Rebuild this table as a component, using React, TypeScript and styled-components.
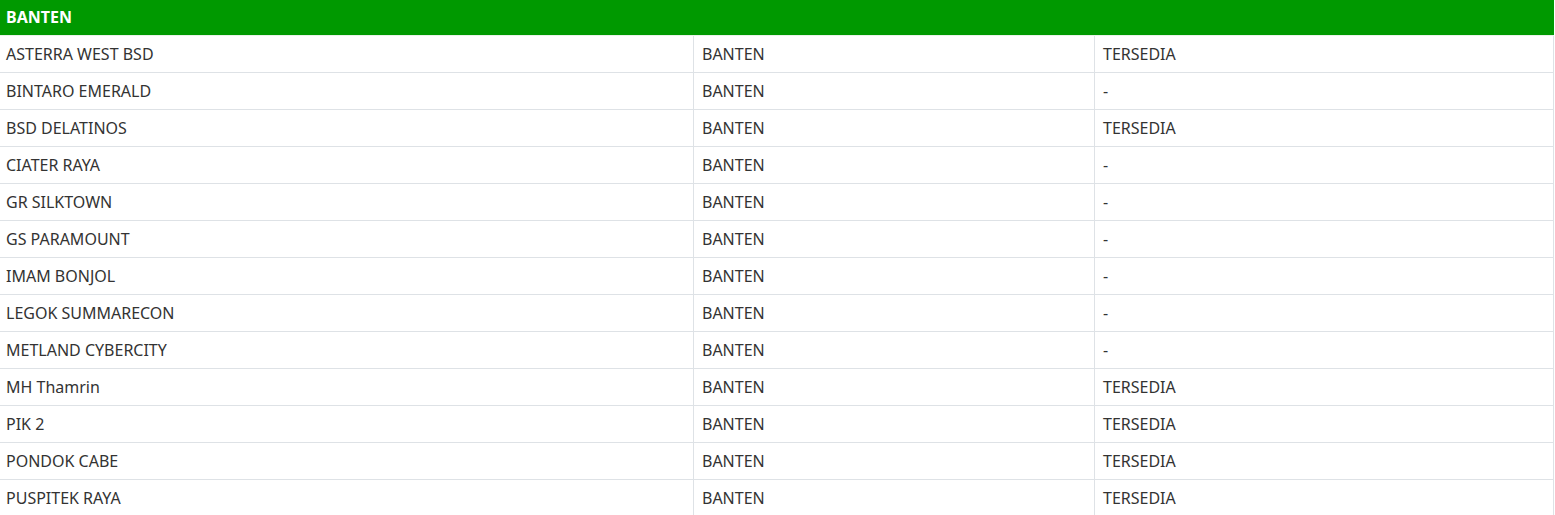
import * as React from 'react';
import styled, { createGlobalStyle } from 'styled-components';

const GlobalStyle = createGlobalStyle`
  body {
    margin: 0;
    background: #ffffff;
    font-family: 'Noto Sans', 'Open Sans', sans-serif;
  }
`;

const Table = styled.div`
  width: 1554px;
  display: grid;
  grid-template-columns: 694px 401px 459px;
`;

const Heading = styled.div`
  grid-column: 1 / -1;
  height: 36px;
  background-color: #009900;
  color: #ffffff;
  font-weight: 700;
  font-size: 16px;
  line-height: 35px;
  padding: 0 6px;
  box-sizing: border-box;
  border-bottom: 1px solid #e8f3e8;
`;

const Cell = styled.div`
  height: 37px;
  box-sizing: border-box;
  padding: 0 0 0 ${(props: { first?: boolean }) => (props.first ? 6 : 8)}px;
  display: flex;
  align-items: center;
  font-size: 16px;
  color: #333333;
  border-bottom: 1px solid #dee2e6;
  border-right: 1px solid #dee2e6;
  white-space: nowrap;
  overflow: hidden;
`;

type Row = { name: string; region: string; status: string };

const rows: Row[] = [
  { name: 'ASTERRA WEST BSD', region: 'BANTEN', status: 'TERSEDIA' },
  { name: 'BINTARO EMERALD', region: 'BANTEN', status: '-' },
  { name: 'BSD DELATINOS', region: 'BANTEN', status: 'TERSEDIA' },
  { name: 'CIATER RAYA', region: 'BANTEN', status: '-' },
  { name: 'GR SILKTOWN', region: 'BANTEN', status: '-' },
  { name: 'GS PARAMOUNT', region: 'BANTEN', status: '-' },
  { name: 'IMAM BONJOL', region: 'BANTEN', status: '-' },
  { name: 'LEGOK SUMMARECON', region: 'BANTEN', status: '-' },
  { name: 'METLAND CYBERCITY', region: 'BANTEN', status: '-' },
  { name: 'MH Thamrin', region: 'BANTEN', status: 'TERSEDIA' },
  { name: 'PIK 2', region: 'BANTEN', status: 'TERSEDIA' },
  { name: 'PONDOK CABE', region: 'BANTEN', status: 'TERSEDIA' },
  { name: 'PUSPITEK RAYA', region: 'BANTEN', status: 'TERSEDIA' },
];

const App = () => (
  <>
    <GlobalStyle />
    <Table>
      <Heading>BANTEN</Heading>
      {rows.map((r) => (
        <React.Fragment key={r.name}>
          <Cell first>{r.name}</Cell>
          <Cell>{r.region}</Cell>
          <Cell>{r.status}</Cell>
        </React.Fragment>
      ))}
    </Table>
  </>
);

export default App;
